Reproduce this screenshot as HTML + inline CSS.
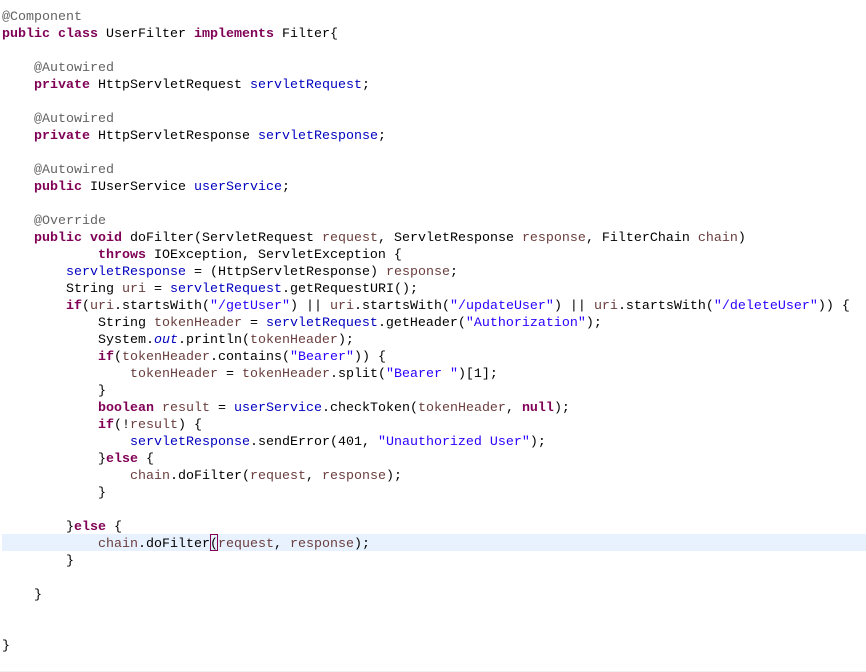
<!DOCTYPE html>
<html>
<head>
<meta charset="utf-8">
<style>
html,body{margin:0;padding:0;background:#fff;width:866px;height:672px;overflow:hidden}
#hl{position:absolute;left:2px;top:534px;width:864px;height:17px;background:#e8f2fe}
#br{position:absolute;left:210px;top:534px;width:6px;height:15px;border:1px solid #7f0055}
#bt{position:absolute;left:0;top:671px;width:866px;height:1px;background:#f0f0f0}
pre{position:absolute;left:2px;top:9px;margin:0;font:13.33px/17px "Liberation Mono",monospace;color:#000}
b{color:#7f0055;font-weight:bold}
.a{color:#646464}
.f{color:#0000c0}
.p{color:#6a3e3e}
.s{color:#2a00ff}
i{color:#0000c0;font-style:italic}
</style>
</head>
<body>
<div id="hl"></div>
<div id="br"></div>
<div id="bt"></div>
<pre><span class="a">@Component</span>
<b>public</b> <b>class</b> UserFilter <b>implements</b> Filter{

    <span class="a">@Autowired</span>
    <b>private</b> HttpServletRequest <span class="f">servletRequest</span>;

    <span class="a">@Autowired</span>
    <b>private</b> HttpServletResponse <span class="f">servletResponse</span>;

    <span class="a">@Autowired</span>
    <b>public</b> IUserService <span class="f">userService</span>;

    <span class="a">@Override</span>
    <b>public</b> <b>void</b> doFilter(ServletRequest <span class="p">request</span>, ServletResponse <span class="p">response</span>, FilterChain <span class="p">chain</span>)
            <b>throws</b> IOException, ServletException {
        <span class="f">servletResponse</span> = (HttpServletResponse) <span class="p">response</span>;
        String <span class="p">uri</span> = <span class="f">servletRequest</span>.getRequestURI();
        <b>if</b>(<span class="p">uri</span>.startsWith(<span class="s">"/getUser"</span>) || <span class="p">uri</span>.startsWith(<span class="s">"/updateUser"</span>) || <span class="p">uri</span>.startsWith(<span class="s">"/deleteUser"</span>)) {
            String <span class="p">tokenHeader</span> = <span class="f">servletRequest</span>.getHeader(<span class="s">"Authorization"</span>);
            System.<i>out</i>.println(<span class="p">tokenHeader</span>);
            <b>if</b>(<span class="p">tokenHeader</span>.contains(<span class="s">"Bearer"</span>)) {
                <span class="p">tokenHeader</span> = <span class="p">tokenHeader</span>.split(<span class="s">"Bearer "</span>)[1];
            }
            <b>boolean</b> <span class="p">result</span> = <span class="f">userService</span>.checkToken(<span class="p">tokenHeader</span>, <b>null</b>);
            <b>if</b>(!<span class="p">result</span>) {
                <span class="f">servletResponse</span>.sendError(401, <span class="s">"Unauthorized User"</span>);
            }<b>else</b> {
                <span class="p">chain</span>.doFilter(<span class="p">request</span>, <span class="p">response</span>);
            }

        }<b>else</b> {
            <span class="p">chain</span>.doFilter(<span class="p">request</span>, <span class="p">response</span>);
        }

    }


}</pre>
</body>
</html>
